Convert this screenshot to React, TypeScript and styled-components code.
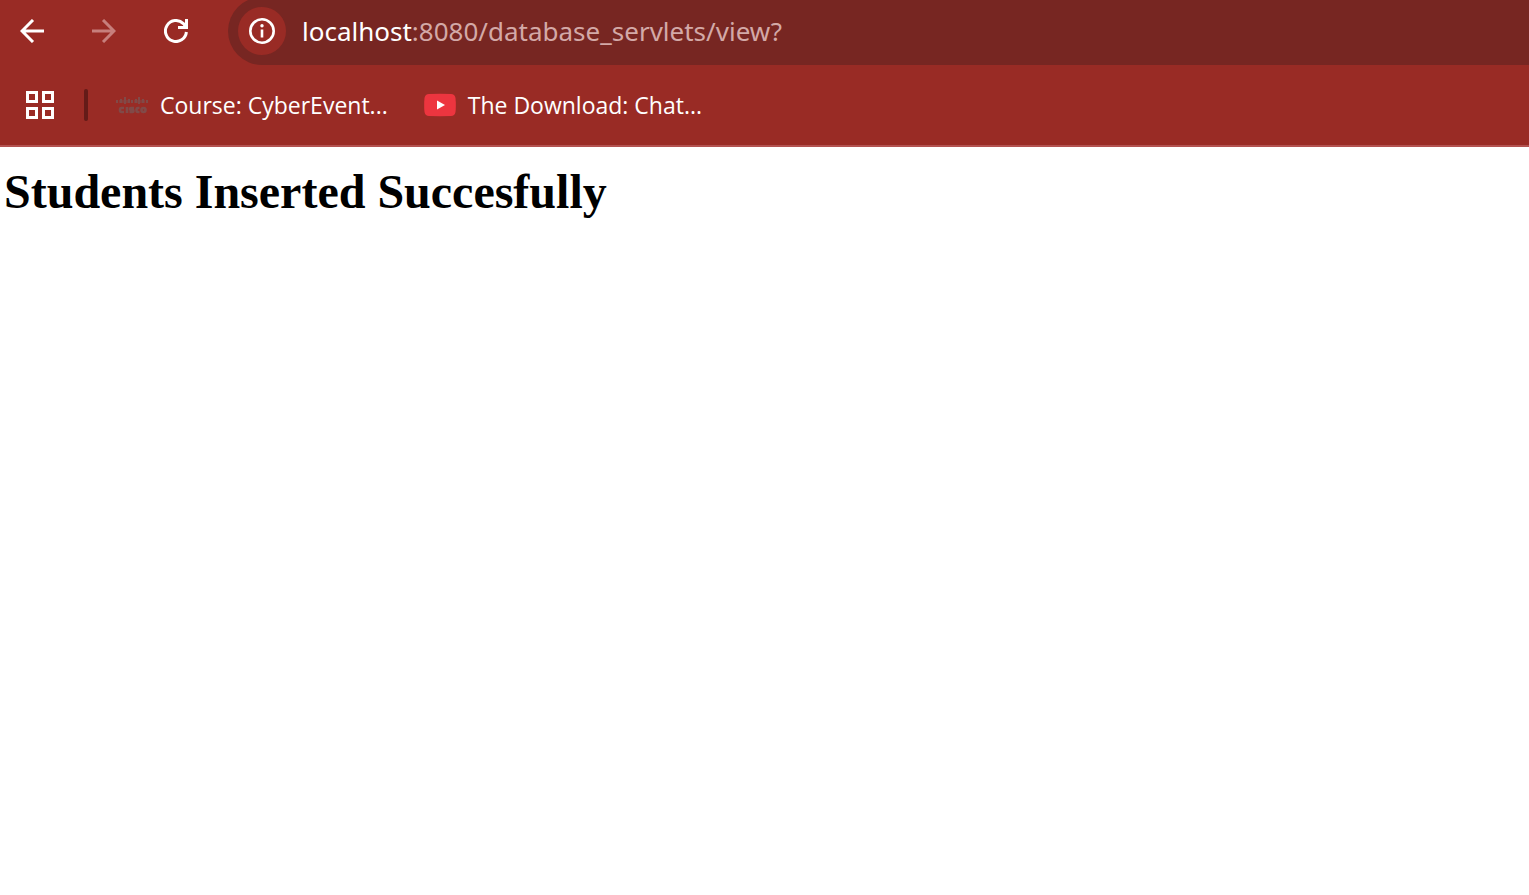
import React from 'react';
import styled, { createGlobalStyle } from 'styled-components';

const GlobalStyle = createGlobalStyle`
  *, *::before, *::after { box-sizing: border-box; }
  body {
    margin: 0;
    background: #fff;
  }
`;

const Window = styled.div`
  display: flex;
  flex-direction: column;
  min-height: 100vh;
`;

const Chrome = styled.header`
  background: #992b25;
  border-bottom: 2px solid #b35250;
  color: #fff;
  font-family: 'Segoe UI', 'Open Sans', sans-serif;
`;

const Toolbar = styled.div`
  display: flex;
  align-items: flex-end;
  height: 65px;
  padding-left: 8px;
  overflow: hidden;
`;

const NavButtons = styled.nav`
  display: flex;
  gap: 24px;
  padding-bottom: 10px;
`;

const IconButton = styled.button`
  display: flex;
  flex: none;
  align-items: center;
  justify-content: center;
  width: 48px;
  height: 48px;
  padding: 0;
  border: 0;
  border-radius: 50%;
  background: transparent;
  color: #fff;

  &:disabled { color: #c77f7c; }
`;

const SiteInfoButton = styled(IconButton)`
  background: #992b25;
`;

const AddressBar = styled.form`
  display: flex;
  flex: 1;
  align-items: center;
  height: 68px;
  margin-left: 28px;
  padding-left: 10px;
  border-radius: 34px 0 0 34px;
  background: #772622;
  font-family: 'Segoe UI', 'Noto Sans', sans-serif;
  font-size: 26px;
`;

const Host = styled.label`
  margin-left: 16px;
  color: #fff;
`;

const UrlInput = styled.input`
  flex: 1;
  min-width: 0;
  padding: 0;
  border: 0;
  outline: 0;
  background: transparent;
  color: #d3a9a7;
  font: inherit;
`;

const Bookmarks = styled.nav`
  display: flex;
  align-items: center;
  height: 80px;
  padding-left: 16px;
`;

const Divider = styled.span`
  width: 4px;
  height: 32px;
  margin: 0 28px 0 20px;
  border-radius: 2px;
  background: #641b18;
`;

const BookmarkList = styled.div`
  display: flex;
  gap: 36px;
`;

const Bookmark = styled.a`
  display: flex;
  align-items: center;
  gap: 12px;
  color: #fff;
  font-size: 23px;
  line-height: 32px;
  text-decoration: none;
  white-space: nowrap;
`;

const Page = styled.main`
  flex: 1;
  padding: 16px 4px;
`;

const Message = styled.h2`
  margin: 0;
  color: #000;
  font: bold 48px/58px 'Times New Roman', 'Liberation Serif', serif;
`;

const BackIcon = () => (
  <svg width="24" height="24" viewBox="0 0 24 24" fill="none" stroke="currentColor" strokeWidth="3" aria-hidden="true">
    <path d="M24 12H2M13 1L2 12L13 23" />
  </svg>
);

const ForwardIcon = () => (
  <svg width="24" height="24" viewBox="0 0 24 24" fill="none" stroke="currentColor" strokeWidth="3" aria-hidden="true">
    <path d="M0 12H22M11 1L22 12L11 23" />
  </svg>
);

const ReloadIcon = () => (
  <svg width="24" height="24" viewBox="0 0 24 24" fill="none" stroke="currentColor" strokeWidth="3" aria-hidden="true">
    <path d="M22.4 13A10.5 10.5 0 1 1 19.4 4.6L22 7.5" />
    <path d="M22.5 0V8.5H14" />
    <path d="M22.5 4V8.5H18Z" fill="currentColor" strokeWidth="1" />
  </svg>
);

const InfoIcon = () => (
  <svg width="26" height="26" viewBox="0 0 26 26" aria-hidden="true">
    <circle cx="13" cy="13" r="11.7" fill="none" stroke="#fff" strokeWidth="2.6" />
    <circle cx="13" cy="7.8" r="1.7" fill="#fff" />
    <path d="M11.7 11.5H14.3V19.5H11.7Z" fill="#fff" />
  </svg>
);

const AppsIcon = () => (
  <svg width="28" height="28" viewBox="0 0 28 28" fill="none" stroke="#fff" strokeWidth="3" aria-hidden="true">
    <path d="M1.5 1.5H10.5V10.5H1.5ZM17.5 1.5H26.5V10.5H17.5ZM1.5 17.5H10.5V26.5H1.5ZM17.5 17.5H26.5V26.5H17.5Z" />
  </svg>
);

const CiscoIcon = () => (
  <svg width="32" height="32" viewBox="0 0 32 32" fill="none" stroke="#814a48" aria-hidden="true">
    <path
      d="M1 11V14M5 10V14M9 8V15M13 10V14M16 11V14M20 10V14M23 8V15M27 10V14M31 11V14"
      strokeWidth="2"
    />
    <path d="M3 12.5H14M18 12.5H29" strokeWidth="3" strokeOpacity=".55" />
    <path
      d="M8 19H5.5Q4 19 4 21T5.5 23H8M11 18V24M18 19H15Q14 19 14 20T15 21H16.5Q17.5 21 17.5 22T16.5 23H13.5M23.5 19H22Q20.5 19 20.5 21T22 23H23.5M27.5 19Q29.5 19 29.5 21T27.5 23T25.5 21T27.5 19Z"
      strokeWidth="2.6"
    />
  </svg>
);

const YouTubeIcon = () => (
  <svg width="32" height="32" viewBox="0 0 32 32" aria-hidden="true">
    <path d="M5 5Q16 4.7 27 5Q30.8 5.2 31.5 9Q32.2 16 31.5 23Q30.8 26.8 27 27Q16 27.3 5 27Q1.2 26.8 .5 23Q-.2 16 .5 9Q1.2 5.2 5 5Z" fill="#ed353f" />
    <path d="M13 11.5L21 16L13 20.5Z" fill="#fff" />
  </svg>
);

export default function App() {
  return (
    <Window>
      <GlobalStyle />
      <Chrome>
        <Toolbar>
          <NavButtons aria-label="Navigation">
            <IconButton type="button" aria-label="Back"><BackIcon /></IconButton>
            <IconButton type="button" aria-label="Forward" disabled><ForwardIcon /></IconButton>
            <IconButton type="button" aria-label="Reload"><ReloadIcon /></IconButton>
          </NavButtons>
          <AddressBar onSubmit={(event: React.FormEvent) => event.preventDefault()}>
            <SiteInfoButton type="button" aria-label="View site information"><InfoIcon /></SiteInfoButton>
            <Host htmlFor="url">localhost</Host>
            <UrlInput id="url" type="text" spellCheck={false} defaultValue=":8080/database_servlets/view?" />
          </AddressBar>
        </Toolbar>
        <Bookmarks aria-label="Bookmarks">
          <IconButton type="button" aria-label="Apps"><AppsIcon /></IconButton>
          <Divider />
          <BookmarkList>
            <Bookmark href="#course"><CiscoIcon />Course: CyberEvent...</Bookmark>
            <Bookmark href="#download"><YouTubeIcon />The Download: Chat...</Bookmark>
          </BookmarkList>
        </Bookmarks>
      </Chrome>
      <Page>
        <Message>Students Inserted Succesfully</Message>
      </Page>
    </Window>
  );
}
